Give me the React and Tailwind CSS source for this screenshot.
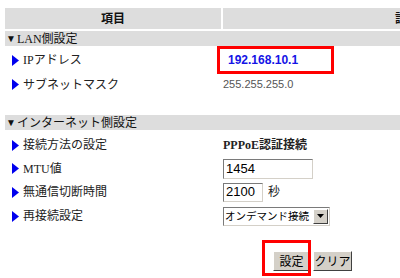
const font = { fontFamily: '"Liberation Serif", "Noto Sans CJK JP", serif' };
const sans = { fontFamily: '"Liberation Sans", Arial, sans-serif' };
const gothic = { fontFamily: '"Noto Sans CJK JP", sans-serif' };

const Arrow = () => (
  <svg width="7" height="11" viewBox="0 0 7 11" className="mr-[4px] shrink-0">
    <polygon points="0,0 7,5.5 0,11" fill="#0000ee" />
  </svg>
);

const Row = ({ label, height, children }) => (
  <div className="flex" style={{ height }}>
    <div className="w-[216px] flex items-center pl-[7px] text-[12px] text-[#222]">
      <Arrow />
      <span>{label}</span>
    </div>
    <div className="flex-1 ml-[2px] flex items-center relative">{children}</div>
  </div>
);

const Section = ({ title }) => (
  <div className="h-[15px] bg-[#dddddd] flex items-center pl-[1px] text-[12px] text-[#111] leading-none">
    <span className="text-[10px] mr-[1px]">▼</span>
    {title}
  </div>
);

const inputBorder = 'border border-t-[#7a7a7a] border-l-[#7a7a7a] border-b-[#d4d0c8] border-r-[#d4d0c8] bg-white';
const btn = 'bg-[#d4d0c8] border border-t-white border-l-white border-b-[#404040] border-r-[#404040] flex items-center justify-center text-[12px] text-black whitespace-nowrap leading-none';

export default function App() {
  return (
    <div className="w-[400px] h-[278px] bg-white overflow-hidden pt-[8px] pl-[5px]" style={font}>
      <div className="w-[600px]">
        {/* header */}
        <div className="flex h-[21px]">
          <div className="w-[216px] bg-[#dddddd] flex items-center justify-center font-bold text-[12px] text-[#111]">項目</div>
          <div className="flex-1 ml-[2px] bg-[#dddddd] flex items-center pl-[172px] font-bold text-[12px] text-[#111]">設定値</div>
        </div>
        <div className="h-[2px]" />
        <Section title="LAN側設定" />

        <Row label="IPアドレス" height={28}>
          <div className="absolute left-[-6px] top-0 w-[117px] h-[28px] border-[3px] border-[#ff0000]" />
          <span className="pl-[5px] text-[12px] font-semibold text-[#1414e6]" style={sans}>
            192.168.10.1
          </span>
        </Row>
        <Row label="サブネットマスク" height={21}>
          <span className="text-[11px] text-[#555]" style={sans}>255.255.255.0</span>
        </Row>

        <div className="h-[20px]" />
        <Section title="インターネット側設定" />
        <div className="h-[3px]" />

        <Row label="接続方法の設定" height={24}>
          <span className="font-bold text-[12px] text-[#222]">PPPoE認証接続</span>
        </Row>
        <Row label="MTU値" height={23}>
          <div className={`w-[90px] h-[20px] ${inputBorder} flex items-center pl-[2px] text-[13px] text-black`} style={sans}>
            1454
          </div>
        </Row>
        <Row label="無通信切断時間" height={24}>
          <div className={`w-[40px] h-[19px] ${inputBorder} flex items-center pl-[2px] text-[13px] text-black`} style={sans}>
            2100
          </div>
          <span className="ml-[5px] text-[12px] text-[#222]">秒</span>
        </Row>
        <Row label="再接続設定" height={24}>
          <div className={`w-[107px] h-[19px] ${inputBorder} flex items-center text-black`}>
            <span className="flex-1 pl-[1px] leading-none text-[10.5px] whitespace-nowrap" style={gothic}>オンデマンド接続</span>
            <div className="w-[15px] h-[15px] mr-[1px] shrink-0 bg-[#d4d0c8] border border-t-white border-l-white border-b-[#404040] border-r-[#404040] flex items-center justify-center">
              <svg width="7" height="4" viewBox="0 0 7 4"><polygon points="0,0 7,0 3.5,4" fill="#000" /></svg>
            </div>
          </div>
        </Row>

        <div className="h-[12px]" />
        <div className="flex h-[36px] pl-[268px] items-start relative">
          <div className="absolute left-[257px] top-[0px] w-[49px] h-[36px] border-[3px] border-[#ff0000]" />
          <div className={`mt-[11px] w-[37px] h-[20px] ${btn}`} style={gothic}>
            設定
          </div>
          <div className={`mt-[11px] ml-[3px] w-[39px] h-[20px] ${btn}`} style={gothic}>
            クリア
          </div>
        </div>
      </div>
    </div>
  );
}
